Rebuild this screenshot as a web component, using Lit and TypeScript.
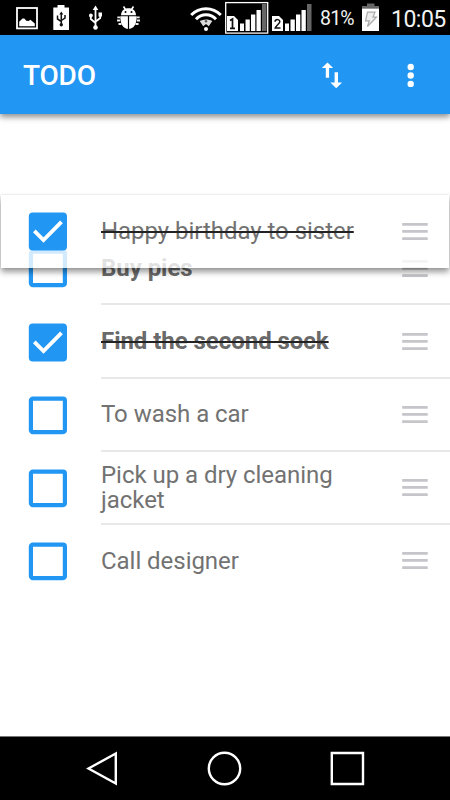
import { LitElement, html, css, svg } from "lit";
import { customElement, property } from "lit/decorators.js";
import { classMap } from "lit/directives/class-map.js";

interface Todo {
  title: string;
  done?: boolean;
  bold?: boolean;
}

const TODOS: Todo[] = [
  { title: "Buy pies", bold: true },
  { title: "Find the second sock", bold: true, done: true },
  { title: "To wash a car" },
  { title: "Pick up a dry cleaning jacket" },
  { title: "Call designer" },
];

const signalBars = svg`
  <path fill="#fff" d="M0 14h7l4 4v11H0z"/>
  <path fill="#fff" d="M13 21.5h4v7.5h-4zM18.5 17.5h4.3v11.5h-4.3zM24 12.5h4.3v16.5H24zM29.5 8h4.3v21h-4.3z"/>
  <path fill="#666" d="M35 2h4.5v27H35z"/>`;

@customElement("status-bar")
class StatusBar extends LitElement {
  static styles = css`
    :host {
      display: flex;
      height: 35px;
      background: #000;
      color: #f2f2f2;
      font-family: Roboto, sans-serif;
      overflow: hidden;
    }
    svg { display: block; flex: none; height: 35px; }
    .picture { margin-left: 16px; }
    .usb-battery { margin-left: 15px; }
    .usb { margin-left: 19px; }
    .bug { margin-left: 14px; }
    .wifi { margin-left: 49px; }
    .sim-one { margin-left: 3px; }
    .sim-two { margin-left: 3px; }
    .percent {
      width: 34px;
      margin-left: 8px;
      font-size: 19.5px;
      line-height: 38px;
      letter-spacing: -0.8px;
      white-space: nowrap;
    }
    .battery { margin-left: 8px; }
    .clock {
      margin-left: 11px;
      font-size: 23px;
      line-height: 39px;
      white-space: nowrap;
      letter-spacing: -0.5px;
    }
  `;

  render() {
    return html`
      <svg class="picture" width="22" height="35" viewBox="0 0 22 35">
        <rect x="1" y="8" width="20" height="20.4" fill="none" stroke="#fff" stroke-width="1.8"/>
        <path fill="#fff" d="M3.2 26.3v-4.500l3.300-3.400 1.800.2 2 2.200 2.300.3 1.800-1.300 4.400 3.600v2.900z"/>
      </svg>
      <svg class="usb-battery" width="17" height="35" viewBox="0 0 17 35">
        <path fill="#fff" d="M4.500 5h7v2.500H16V30H.3V7.500h4.200z"/>
        <g fill="none" stroke="#111" stroke-width="1.500">
          <path d="M8.300 13v12M4.500 15.500V19l3.800 2.500M12 15v3l-3.700 2.500"/>
        </g>
        <path fill="#111" d="M6.300 14.500l2-3 2 3z"/><circle cx="8.300" cy="24.800" r="1.700" fill="#111"/>
      </svg>
      <svg class="usb" width="14" height="35" viewBox="0 0 14 35">
        <g fill="none" stroke="#fff" stroke-width="1.800">
          <path d="M6.500 9v18M1.800 15v4l4.700 4M11.200 14v4l-4.700 3.800"/>
        </g>
        <path fill="#fff" d="M3.700 10l2.800-4.500L9.300 10z"/>
        <circle cx="1.900" cy="15.500" r="1.900" fill="#fff"/><path fill="#fff" d="M9.500 12.500H13v4H9.500z"/>
        <circle cx="6.500" cy="27.500" r="2.300" fill="#fff"/>
      </svg>
      <svg class="bug" width="24" height="35" viewBox="0 0 24 35">
        <path d="M6.500 6.500l2 3M16.500 6.500l-2 3" stroke="#fff" stroke-width="1.600"/>
        <path fill="#fff" d="M4 15.300c.3-4.800 3-7 7.500-7s7.200 2.200 7.500 7z"/>
        <circle cx="8.500" cy="12" r="1" fill="#000"/><circle cx="14.500" cy="12" r="1" fill="#000"/>
        <path fill="#fff" d="M3.300 16.300h7.600V29c-5-.5-7.600-5-7.600-12.700zM12.100 16.300h7.600c0 7.700-2.600 12.200-7.600 12.700z"/>
        <path d="M.3 17.300h3M19.700 17.300h3M0 20.500h3M20 20.500h3M1.500 24h3M18.500 24h3" fill="none" stroke="#eee" stroke-width="1.800"/>
      </svg>
      <svg class="wifi" width="32" height="35" viewBox="0 0 32 35">
        <g fill="none" stroke="#fff">
          <path stroke-width="3" d="M1.200 15C9.500 6.500 22.500 6.500 30.800 15"/>
          <path stroke-width="3" d="M6 19.300C11.500 13.300 20.500 13.300 26 19.300"/>
        </g>
        <path fill="#ddd" d="M9.700 21c4-2 8.600-2 12.600 0l-3.500 5.300-2.800-2.300-2.800 2.300z"/>
        <circle cx="16" cy="21.200" r="1.200" fill="#555"/>
        <circle cx="16" cy="29" r="2" fill="#fff"/>
      </svg>
      <svg class="sim-one" width="43.500" height="35" viewBox="0 0 43.500 35">
        <rect x=".7" y="2.600" width="42" height="30.500" fill="none" stroke="#fff" stroke-width="1.300"/>
        <g transform="translate(2 2)">${signalBars}</g>
        <path d="M5 20.500l2.500-1.500v9M5 28.300h5" fill="none" stroke="#111" stroke-width="1.700"/>
      </svg>
      <svg class="sim-two" width="40.500" height="35" viewBox="0 0 40.500 35">
        <g transform="translate(0 2)">${signalBars}</g>
        <path d="M3 21.800c.3-3 5-2.800 4.800 0-.1 2-3.800 3.700-4.600 6.200h5.300" fill="none" stroke="#111" stroke-width="1.500"/>
      </svg>
      <span class="percent">81%</span>
      <svg class="battery" width="18" height="35" viewBox="0 0 18 35">
        <path fill="#666" d="M5 3.500h7.500V6H17v2.500H0V6h5z"/>
        <path fill="#fff" d="M0 8.500h17V31H0z"/>
        <path d="M5.500 12.200h7.500l-2 5h3.500L5.500 26.500l1.700-5.700H3.500z" fill="#eee" stroke="#aaa" stroke-width="1.200"/>
      </svg>
      <span class="clock">10:05</span>
    `;
  }
}

@customElement("app-bar")
class AppBar extends LitElement {
  static styles = css`
    :host {
      display: flex;
      align-items: center;
      height: 79px;
      box-sizing: border-box;
      padding: 0 35px 0 23px;
      background: #2196f3;
      color: #fff;
      font-family: Roboto, sans-serif;
      box-shadow: 0 3px 6px rgba(0, 0, 0, 0.45);
    }
    h1 {
      flex: 1;
      margin: 3px 0 0;
      font-size: 28px;
      line-height: 34px;
      font-weight: 500;
      letter-spacing: -0.2px;
    }
    svg { display: block; }
    .sort { margin-right: 54px; }
  `;

  render() {
    return html`
      <h1>TODO</h1>
      <svg class="sort" width="40" height="40" viewBox="0 0 40 40" fill="#fff">
        <path d="M14.500 7.400L8.800 13.100h4V22.700h3.300v-9.600h4.100zM23.200 33.200l5.900-5.800h-4.100V17.300h-3.400v10.100h-4.200z"/>
      </svg>
      <svg width="8" height="28" viewBox="0 0 8 28" fill="#fff">
        <circle cx="3.700" cy="6" r="3.200"/>
        <circle cx="3.700" cy="14.500" r="3.200"/>
        <circle cx="3.700" cy="22.900" r="3.200"/>
      </svg>
    `;
  }
}

@customElement("todo-row")
class TodoRow extends LitElement {
  @property({ attribute: false }) item!: Todo;

  static styles = css`
    :host {
      display: flex;
      align-items: center;
      height: 73.150px;
      box-sizing: border-box;
      padding-left: 28px;
      font-family: Roboto, sans-serif;
    }
    svg { display: block; flex: none; }
    .body {
      display: flex;
      flex: 1;
      align-items: center;
      align-self: stretch;
      box-sizing: border-box;
      margin-left: 34px;
      padding-right: 22.500px;
      border-bottom: 2px solid var(--divider, #e8e8e8);
    }
    .title {
      width: 264px;
      padding-top: 1px;
      color: #727272;
      font-size: 24px;
      line-height: 24.500px;
      letter-spacing: -0.04px;
    }
    .bold { font-weight: 700; color: #6a6a6a; }
    .done { text-decoration: line-through 1.500px #222; }
    .grip { margin-left: auto; }
  `;

  render() {
    const { title, done = false, bold = false } = this.item;
    return html`
      <svg width="39" height="39" viewBox="0 0 39 39">
        ${done
          ? svg`<rect x=".8" y=".5" width="38.200" height="38" rx="4" fill="#2196f3"/>
              <path d="M6.300 18.900l9.200 9.200L33.500 9.800" fill="none" stroke="#fff" stroke-width="3.800"/>`
          : svg`<rect x="2.900" y="2.700" width="34" height="33.400" rx="2" fill="#fff" stroke="#2196f3" stroke-width="4.200"/>`}
      </svg>
      <div class="body">
        <span class=${classMap({ title: true, bold, done })}>${title}</span>
        <svg class="grip" width="26" height="20" viewBox="0 0 26 20">
          <path fill="#c5c5ca" d="M.2 2h25.500v2.700H.2zM.2 9.100h25.500v2.700H.2zM.2 16.200h25.500v2.700H.2z"/>
        </svg>
      </div>
    `;
  }
}

@customElement("nav-bar")
class NavBar extends LitElement {
  static styles = css`
    :host {
      display: flex;
      align-items: center;
      justify-content: center;
      gap: 82px;
      height: 64px;
      box-sizing: border-box;
      background: #000;
      border-top: 1px solid #777;
    }
    svg { display: block; fill: none; stroke: #fff; stroke-width: 2.400; }
  `;

  render() {
    return html`
      <svg width="40" height="40" viewBox="0 0 40 40"><path d="M5.500 19.500L32.800 4.500v30z"/></svg>
      <svg width="40" height="40" viewBox="0 0 40 40"><circle cx="19.500" cy="19.500" r="15.700"/></svg>
      <svg width="40" height="40" viewBox="0 0 40 40"><path d="M4.800 4h31.200v31H4.800z"/></svg>
    `;
  }
}

@customElement("app-root")
class AppRoot extends LitElement {
  static styles = css`
    :host {
      display: flex;
      flex-direction: column;
      height: 800px;
      background: #fff;
      overflow: hidden;
    }
    main {
      position: relative;
      flex: 1;
      padding-top: 118.300px;
    }
    .last { --divider: transparent; }
    .dragged {
      position: absolute;
      top: 81px;
      left: 1px;
      right: 1px;
      --divider: transparent;
      background: rgba(255, 255, 255, 0.8);
      box-shadow: 0 4px 6px rgba(0, 0, 0, 0.4), 0 0 2px rgba(0, 0, 0, 0.12);
    }
    .dragged todo-row { margin: 0 -1px; }
  `;

  render() {
    return html`
      <status-bar></status-bar>
      <app-bar></app-bar>
      <main>
        ${TODOS.map(
          (item, i) => html`<todo-row class=${classMap({ last: i === TODOS.length - 1 })} .item=${item}></todo-row>`,
        )}
        <div class="dragged">
          <todo-row .item=${{ title: "Happy birthday to sister", done: true }}></todo-row>
        </div>
      </main>
      <nav-bar></nav-bar>
    `;
  }
}
